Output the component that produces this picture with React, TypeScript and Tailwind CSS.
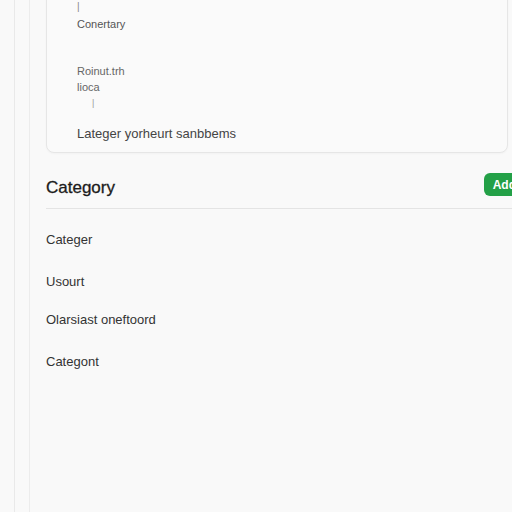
const listItems = ['Categer', 'Usourt', 'Olarsiast oneftoord', 'Categont'];

const App: React.FC = () => {
    return (
        <div className="w-[512px] h-[512px] overflow-hidden bg-[#f9f9f9] font-['Liberation_Sans',Arial,sans-serif]">
            <div className="ml-[14px] h-full border-l border-[#e9e9e9]">
                <div className="ml-[14px] h-full flex flex-col border-l border-[#ececec] pl-[16px] w-[560px]">
                    {/* top card, cut off by the window */}
                    <div className="-mt-[12px] w-[462px] rounded-b-lg border border-[#e6e6e6] bg-[#fafafa] pl-[30px] pt-[12px] pb-[9px] shadow-[0_1px_2px_rgba(0,0,0,0.03)]">
                        <div className="h-[12px] text-[10px] leading-[12px] text-[#888]">|</div>
                        <div className="mt-[4px] text-[11px] leading-[14px] text-[#555]">Conertary</div>
                        <div className="mt-[32px] text-[11px] leading-[16px] text-[#666]">Roinut.trh</div>
                        <div className="text-[11px] leading-[16px] text-[#666]">lioca</div>
                        <div className="ml-[15px] text-[9px] leading-[16px] text-[#999]">|</div>
                        <div className="mt-[14px] text-[13px] leading-[18px] text-[#444]">Lateger yorheurt sanbbems</div>
                    </div>

                    <div className="mt-[19px] flex items-start justify-between w-[479px]">
                        <h2 className="text-[17px] text-[#1c1c1c] leading-[32px] [-webkit-text-stroke:0.3px_#1c1c1c]">Category</h2>
                        <button className="mt-[1px] h-[23px] rounded-md bg-[#23a047] px-[9px] text-[12px] font-bold text-white">
                            Add
                        </button>
                    </div>
                    <div className="mt-[4px] border-t border-[#e4e4e4]" />

                    <ul className="pt-[23px]">
                        {listItems.map((item, i) => (
                            <li
                                key={item}
                                className={`${i === 0 ? '' : i === 2 ? 'mt-[22px]' : 'mt-[26px]'} h-[16px] text-[13px] leading-[16px] text-[#333]`}
                            >
                                {item}
                            </li>
                        ))}
                    </ul>
                </div>
            </div>
        </div>
    );
};

export default App;
